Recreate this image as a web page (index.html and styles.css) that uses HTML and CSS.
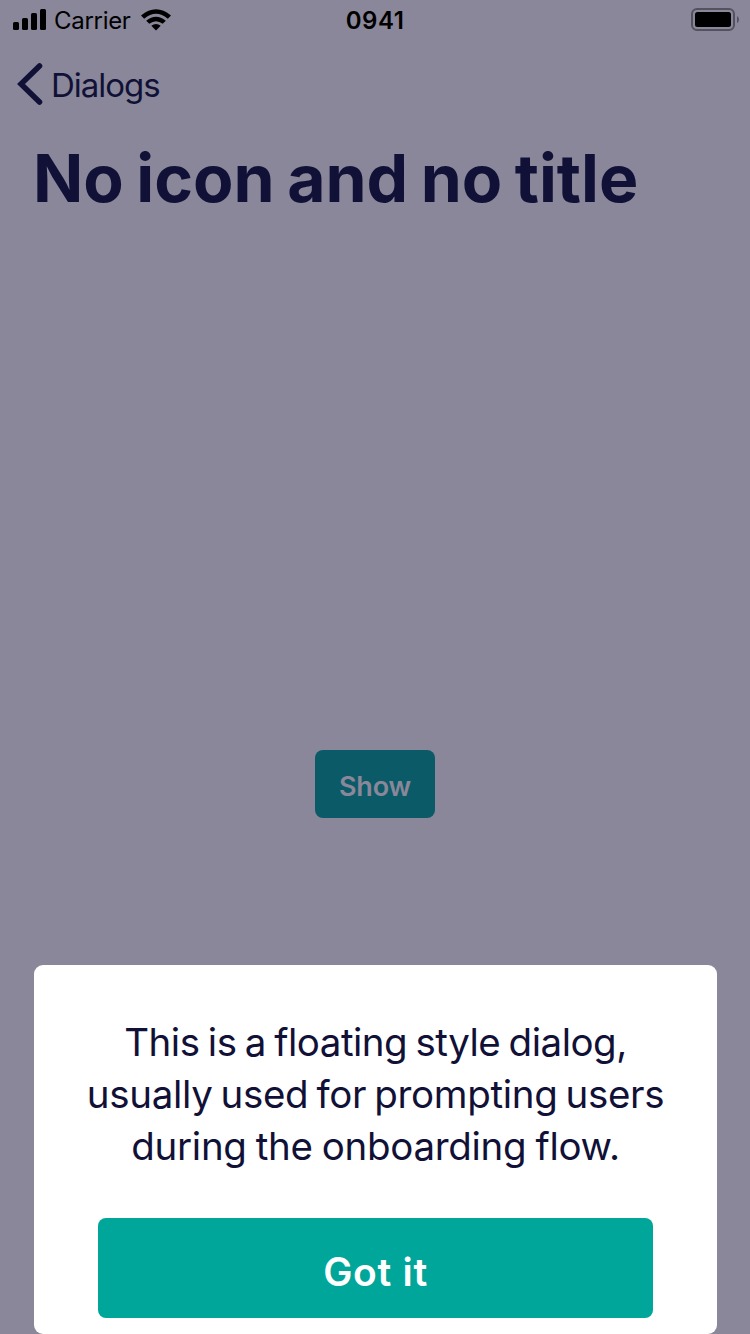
FILE: index.html
```html
<!DOCTYPE html>
<html lang="en">
<head>
<meta charset="utf-8">
<title>Dialogs</title>
<link rel="stylesheet" href="styles.css">
</head>
<body>
<div class="screen">
  <header class="status">
    <div class="status-left">
      <svg class="signal" width="34" height="22" viewBox="0 0 34 22"><rect x="0" y="13" width="6" height="8" rx="1.5"/><rect x="9" y="9" width="6" height="12" rx="1.5"/><rect x="18" y="4" width="6" height="17" rx="1.5"/><rect x="27" y="0" width="6" height="21" rx="1.5"/></svg>
      <span class="carrier">Carrier</span>
      <svg class="wifi" width="30" height="22" viewBox="0 0 30 22"><path d="M0 6.500Q15 -6 30 6.500L26.800 9.700Q15 0 3.200 9.700Z"/><path d="M5.200 11.700Q15 3.700 24.800 11.700L21.700 14.800Q15 9.500 8.300 14.800Z"/><path d="M10.300 16.800Q15 13 19.700 16.800L15 21.500Z"/></svg>
    </div>
    <span class="time">0941</span>
    <svg class="battery" width="48" height="24" viewBox="0 0 48 24"><rect x="1" y="1" width="42" height="21" rx="5" fill="none" stroke="#53525e" stroke-width="2"/><rect x="4" y="4" width="36" height="15" rx="2.5"/><path d="M46 8q2 1 2 3.500q0 2.500-2 3.500z" fill="#53525e"/></svg>
  </header>
  <nav class="nav">
    <svg class="chevron" width="26" height="42" viewBox="0 0 26 42"><path d="M22.500 3L4 21L22.500 39" fill="none" stroke="#111137" stroke-width="5.500" stroke-linecap="round"/></svg>
    <span class="back">Dialogs</span>
  </nav>
  <h1 class="title">No icon and no title</h1>
  <main class="content"><button class="show">Show</button></main>
  <section class="dialog">
    <p class="message"><span class="line one">This is a floating style dialog,</span><span class="line two">usually used for prompting users</span><span class="line three">during the onboarding flow.</span></p>
    <button class="confirm">Got it</button>
  </section>
</div>
</body>
</html>
```
FILE: styles.css
```css
* { box-sizing: border-box; }
body { margin: 0; font-family: Inter, "Liberation Sans", sans-serif; color: #111137; background: #898799; }
.screen { width: 750px; height: 1334px; overflow: hidden; display: flex; flex-direction: column; }
.status { height: 40px; display: grid; grid-template-columns: 1fr auto 1fr; grid-template-rows: 40px; color: #000; padding: 0 11px 0 13px; align-items: center; }
.status-left { display: flex; align-items: center; }
.carrier { font-size: 24px; line-height: 38px; letter-spacing: -.3px; margin-left: 7px; padding-top: 2px; }
.wifi { margin-left: 10px; }
.time { font-size: 24px; font-weight: 600; line-height: 38px; letter-spacing: .5px; padding-top: 2px; margin-right: 2px; }
.battery { justify-self: end; }
.nav { height: 88px; display: flex; align-items: center; padding-left: 17px; }
.back { font-size: 33px; line-height: 40px; margin-left: 8px; letter-spacing: -1px; padding-top: 1px; }
.title { margin: 0; height: 104px; padding-left: 33px; font-size: 66px; line-height: 101px; font-weight: 700; letter-spacing: -.05px; word-spacing: -2.9px; white-space: nowrap; }
.content { flex: 1; display: flex; justify-content: center; padding-top: 518px; }
button { border: 0; border-radius: 8px; font-family: inherit; font-weight: 600; }
.show { width: 120px; height: 68px; padding: 5px 0 0; font-size: 27px; letter-spacing: -.2px; background: #0a5b67; color: #898799; }
.dialog { height: 369px; flex: none; margin: 0 33px 0 34px; padding: 51px 64px 16px; border-radius: 9px; background: #fff; display: flex; flex-direction: column; align-items: center; justify-content: space-between; }
.message { margin: 0; font-size: 38.5px; line-height: 52px; text-align: center; white-space: nowrap; }
.line { display: block; }
.one { letter-spacing: -.5px; word-spacing: -2px; }
.two { letter-spacing: -.31px; word-spacing: -2.5px; }
.three { letter-spacing: -.29px; word-spacing: -1.5px; }
.confirm { width: 555px; height: 100px; padding: 6px 0 0; font-size: 39px; letter-spacing: .7px; background: #00a699; color: #fff; }
```
